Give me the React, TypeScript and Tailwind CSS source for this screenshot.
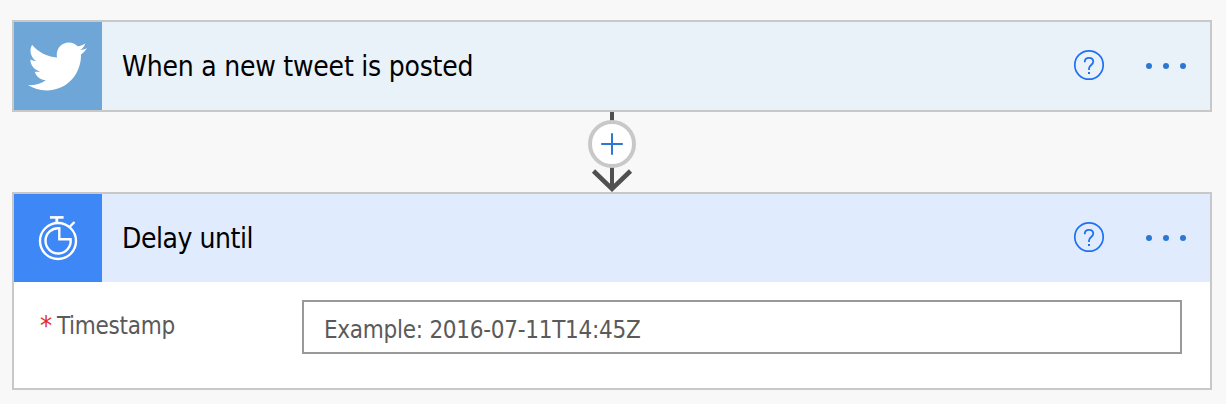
import React from "react";
import { FaTwitter } from "react-icons/fa";

function StopwatchIcon() {
  return (
    <svg width="88" height="88" viewBox="0 0 88 88" fill="none" stroke="#fff">
      <circle cx="44" cy="47" r="18" strokeWidth="2.4" />
      <path d="M36 23.400H49.600" strokeWidth="2.600" />
      <path d="M42.800 24V29" strokeWidth="2.800" />
      <path d="M55.500 33L60.500 28" strokeWidth="2.400" />
      <path d="M45.300 34.300V45.300H56.600A12.600 12.600 0 1 1 45.300 34.300Z" strokeWidth="2.400" />
    </svg>
  );
}

function HelpIcon() {
  return (
    <svg width="32" height="32" viewBox="0 0 32 32" fill="none" stroke="#2070f3">
      <circle cx="16" cy="16" r="14.2" strokeWidth="1.7" />
      <path d="M11.800 13.200V12.600C11.800 10.200 13.600 8.800 16 8.800C18.600 8.800 20.300 10.400 20.300 12.600C20.300 16 16 16 16 19.500V21" strokeWidth="1.800" />
      <path d="M15 24H17" strokeWidth="2" />
    </svg>
  );
}

function HeaderActions() {
  return (
    <div className="ml-auto flex items-center pr-6">
      <button type="button" aria-label="Help" className="-mt-0.5 mr-[41px]">
        <HelpIcon />
      </button>
      <button type="button" aria-label="More" className="flex w-10 items-center justify-between">
        <span className="size-1.5 rounded-full bg-[#2b78d4]" />
        <span className="size-1.5 rounded-full bg-[#2b78d4]" />
        <span className="size-1.5 rounded-full bg-[#2b78d4]" />
      </button>
    </div>
  );
}

function Connector() {
  return (
    <svg className="mx-auto block" width="52" height="80" viewBox="0 0 52 80" fill="none">
      <path d="M26 0V78" stroke="#505050" strokeWidth="4" />
      <path d="M7.500 59L26 76.800L44.500 59" stroke="#505050" strokeWidth="4.600" />
      <circle cx="26" cy="32" r="22" fill="#fff" stroke="#c8c8c8" strokeWidth="4" />
      <path d="M15.200 32H36.800M26 21.200V42.800" stroke="#2b78d4" strokeWidth="2" />
    </svg>
  );
}

export default function App() {
  return (
    <main className="h-[404px] w-[1226px] bg-[#f8f8f8] pt-5 pr-3.5 pl-3 font-['DejaVu_Sans_Condensed','DejaVu_Sans',sans-serif] [font-stretch:condensed]">
      <section className="flex h-[92px] border-2 border-[#c8c8c8] bg-[#e9f1f9]">
        <div className="flex size-[88px] items-center justify-center bg-[#6ea6d8] pr-0.5">
          <FaTwitter size={59} color="#fff" />
        </div>
        <h2 className="ml-5 self-center pt-0.5 text-[28px] leading-9 tracking-[-0.23px] whitespace-nowrap text-black">
          When a new tweet is posted
        </h2>
        <HeaderActions />
      </section>
      <Connector />
      <section className="h-[198px] border-2 border-[#c8c8c8] bg-white">
        <header className="flex h-[88px] bg-[#e0ecfd]">
          <div className="size-[88px] bg-[#3d87f7]">
            <StopwatchIcon />
          </div>
          <h2 className="ml-5 self-center pt-0.5 text-[28px] leading-9 tracking-[-0.45px] whitespace-nowrap text-black">
            Delay until
          </h2>
          <HeaderActions />
        </header>
        <div className="flex pt-[18px] pr-7 pl-[26px]">
          <label htmlFor="timestamp" className="flex w-[262px] pt-2.5 text-[24px] leading-8 tracking-[-0.27px] text-[#5a5a5a]">
            <span className="mr-[5px] text-[27px] text-[#e02b2b]">*</span>
            <span>Timestamp</span>
          </label>
          <input
            id="timestamp"
            placeholder="Example: 2016-07-11T14:45Z"
            className="h-[54px] w-[880px] border-2 border-[#999] bg-white px-5 pt-1.5 text-[24px] tracking-[-0.27px] placeholder:text-[#5a5a5a] placeholder:opacity-100"
          />
        </div>
      </section>
    </main>
  );
}
